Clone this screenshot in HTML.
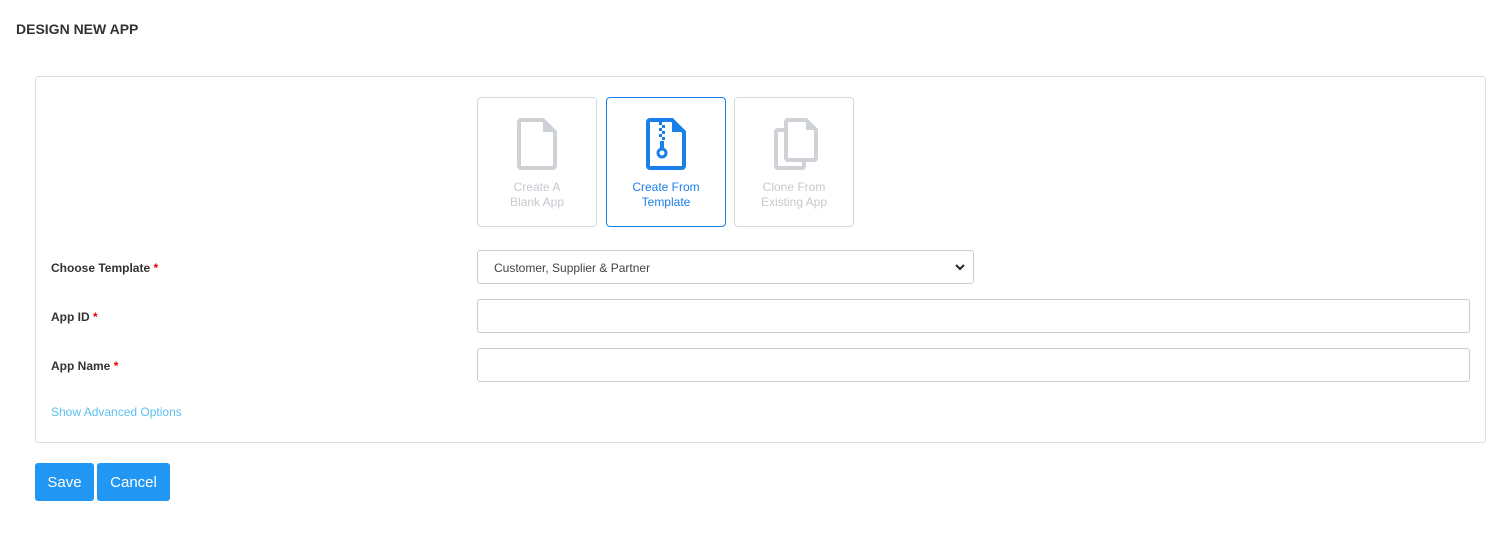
<!DOCTYPE html>
<html><head><style>
body{margin:0;width:1506px;height:555px;background:#fff;font-family:"Liberation Sans",sans-serif;position:relative;overflow:hidden}
.a{position:absolute}
h1{position:absolute;left:16px;top:21px;margin:0;font-size:14px;font-weight:bold;color:#333}
.panel{left:35px;top:76px;width:1449px;height:365px;border:1px solid #ddd;border-radius:3px}
.card{top:97px;width:118px;height:128px;border:1px solid #d6d9dc;border-radius:4px;text-align:center;font-size:12px;line-height:15px;color:#c5c9ce}
.card svg{position:absolute;left:39px;top:20px}
.card div{position:absolute;left:0;right:0;top:82px}
.sel{border-color:#1a7fe8;color:#1a7fe8}
.lbl{left:51px;font-size:12px;font-weight:bold;color:#333}
.lbl span{color:#e00}
.inp{left:477px;height:32px;border:1px solid #ccc;border-radius:3px;box-sizing:border-box}
.btn{top:463px;height:38px;background:#2196f3;color:#fff;font-size:15px;line-height:40px;text-align:center;border-radius:3px}
</style></head><body>
<h1>DESIGN NEW APP</h1>
<div class="a panel"></div>
<div class="a card" style="left:477px"><svg width="40" height="52" viewBox="0 0 40 52"><path d="M4 2H26L38 14V48a2 2 0 0 1-2 2H4a2 2 0 0 1-2-2V4a2 2 0 0 1 2-2z" fill="none" stroke="#ced2d7" stroke-width="4"/><path d="M26 2V14H38" fill="#ced2d7"/></svg><div>Create A<br>Blank App</div></div>
<div class="a card sel" style="left:606px"><svg width="40" height="52" viewBox="0 0 40 52"><path d="M4 2H26L38 14V48a2 2 0 0 1-2 2H4a2 2 0 0 1-2-2V4a2 2 0 0 1 2-2z" fill="none" stroke="#1a7fe8" stroke-width="4"/><path d="M26 2V14H38z" fill="#1a7fe8"/><rect x="13" y="4" width="3" height="3" fill="#1a7fe8"/><rect x="16" y="7" width="3" height="3" fill="#1a7fe8"/><rect x="13" y="10" width="3" height="3" fill="#1a7fe8"/><rect x="16" y="13" width="3" height="3" fill="#1a7fe8"/><rect x="13" y="16" width="3" height="3" fill="#1a7fe8"/><rect x="16" y="19" width="3" height="3" fill="#1a7fe8"/><rect x="14" y="23" width="4" height="8" fill="#1a7fe8"/><circle cx="16" cy="35" r="4" fill="none" stroke="#1a7fe8" stroke-width="3"/></svg><div>Create From<br>Template</div></div>
<div class="a card" style="left:734px"><svg width="46" height="52" viewBox="0 0 46 52"><path d="M10 12H4a2 2 0 0 0-2 2V48a2 2 0 0 0 2 2H28a2 2 0 0 0 2-2v-4" fill="none" stroke="#ced2d7" stroke-width="4"/><path d="M14 2H32L42 12V40a2 2 0 0 1-2 2H14a2 2 0 0 1-2-2V4a2 2 0 0 1 2-2z" fill="none" stroke="#ced2d7" stroke-width="4"/><path d="M32 2V12H42z" fill="#ced2d7"/></svg><div>Clone From<br>Existing App</div></div>
<div class="a lbl" style="top:261px">Choose Template <span>*</span></div>
<div class="a lbl" style="top:310px">App ID <span>*</span></div>
<div class="a lbl" style="top:359px">App Name <span>*</span></div>
<div class="a inp" style="top:250px;width:497px;height:34px;font-size:12px;color:#444;padding:10px 0 0 16px">Customer, Supplier &amp; Partner<svg class="a" style="right:8px;top:13px" width="10" height="7" viewBox="0 0 10 7"><path d="M1 1l4 4 4-4" fill="none" stroke="#222" stroke-width="2"/></svg></div>
<div class="a inp" style="top:299px;width:993px;height:34px"></div>
<div class="a inp" style="top:348px;width:993px;height:34px"></div>
<div class="a" style="left:51px;top:405px;font-size:12px;color:#5bc0f0">Show Advanced Options</div>
<div class="a btn" style="left:35px;width:59px">Save</div>
<div class="a btn" style="left:97px;width:73px">Cancel</div>
</body></html>
